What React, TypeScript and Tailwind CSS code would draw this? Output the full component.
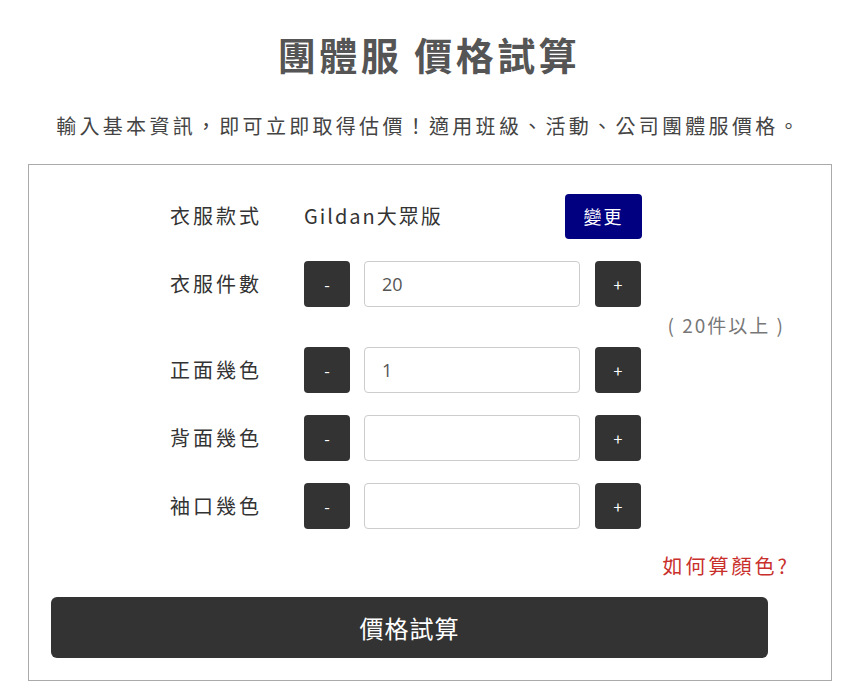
import { useState } from "react";

const font = "font-['Noto_Sans_CJK_TC','Noto_Sans',sans-serif]";

interface CounterRowProps {
    label: string;
    value: string;
    onChange: (v: string) => void;
}

const CounterRow = (props: CounterRowProps) => {
    const { label, value, onChange } = props;

    const step = (d: number) => {
        const n = parseInt(value || "0", 10) + d;
        onChange(n < 0 ? "0" : String(n));
    };

    return (
        <div className="flex h-[46px] items-center">
            <div className="w-[134px] text-[20px] tracking-[3px] text-[#333]">{label}</div>
            <button
                className="flex h-[46px] w-[46px] items-center justify-center rounded-[4px] bg-[#333] text-[16px] text-white"
                onClick={() => step(-1)}
                type="button"
            >
                -
            </button>
            <input
                className="ml-[14px] h-[46px] w-[216px] rounded-[4px] border border-[#ccc] bg-white px-[17px] font-['Open_Sans',sans-serif] text-[18px] text-[#555] outline-none"
                onChange={(e) => onChange(e.target.value)}
                value={value}
            />
            <button
                className="ml-[15px] flex h-[46px] w-[46px] items-center justify-center rounded-[4px] bg-[#333] text-[16px] text-white"
                onClick={() => step(1)}
                type="button"
            >
                +
            </button>
        </div>
    );
};

export default function App() {
    const [qty, setQty] = useState("20");
    const [front, setFront] = useState("1");
    const [back, setBack] = useState("");
    const [cuff, setCuff] = useState("");

    return (
        <div className={`min-h-[696px] bg-white ${font}`}>
            <h1 className="pt-[27px] text-center text-[38px] font-bold leading-[54px] tracking-[3.5px] text-[#555]">
                團體服 價格試算
            </h1>
            <p className="mt-[30px] text-center text-[20px] leading-[30px] tracking-[3.3px] text-[#444]">
                輸入基本資訊，即可立即取得估價！適用班級、活動、公司團體服價格。
            </p>

            <div className="mt-[23px] ml-[28px] w-[804px] border border-[#aaa] pt-[28px] pb-[22px]">
                <div className="ml-[141px] flex w-[472px] flex-col">
                    <div className="flex h-[46px] items-center">
                        <div className="w-[134px] text-[20px] tracking-[3px] text-[#333]">衣服款式</div>
                        <div className="flex-1 text-[20px] tracking-[2px] text-[#333]">Gildan大眾版</div>
                        <button
                            className="h-[45px] w-[77px] rounded-[4px] bg-[#000080] text-[18px] tracking-[2px] text-white"
                            type="button"
                        >
                            變更
                        </button>
                    </div>
                    <div className="mt-[22px]">
                        <CounterRow label="衣服件數" onChange={setQty} value={qty} />
                    </div>
                </div>

                <div className="flex h-[40px] items-center justify-end pr-[46px] pb-[4px] text-[19px] tracking-[2px] text-[#777]">
                    ( 20件以上 )
                </div>

                <div className="ml-[141px] flex w-[472px] flex-col gap-[22px]">
                    <CounterRow label="正面幾色" onChange={setFront} value={front} />
                    <CounterRow label="背面幾色" onChange={setBack} value={back} />
                    <CounterRow label="袖口幾色" onChange={setCuff} value={cuff} />
                </div>

                <div className="mt-[23px] flex justify-end pr-[41px]">
                    <a className="text-[20px] leading-[28px] tracking-[3px] text-[#c9302c]" href="#colors">
                        如何算顏色?
                    </a>
                </div>

                <button
                    className="mt-[17px] ml-[22px] flex h-[61px] w-[717px] items-center justify-center rounded-[6px] bg-[#333] text-[24px] tracking-[1px] text-white"
                    type="button"
                >
                    價格試算
                </button>
            </div>
        </div>
    );
}
